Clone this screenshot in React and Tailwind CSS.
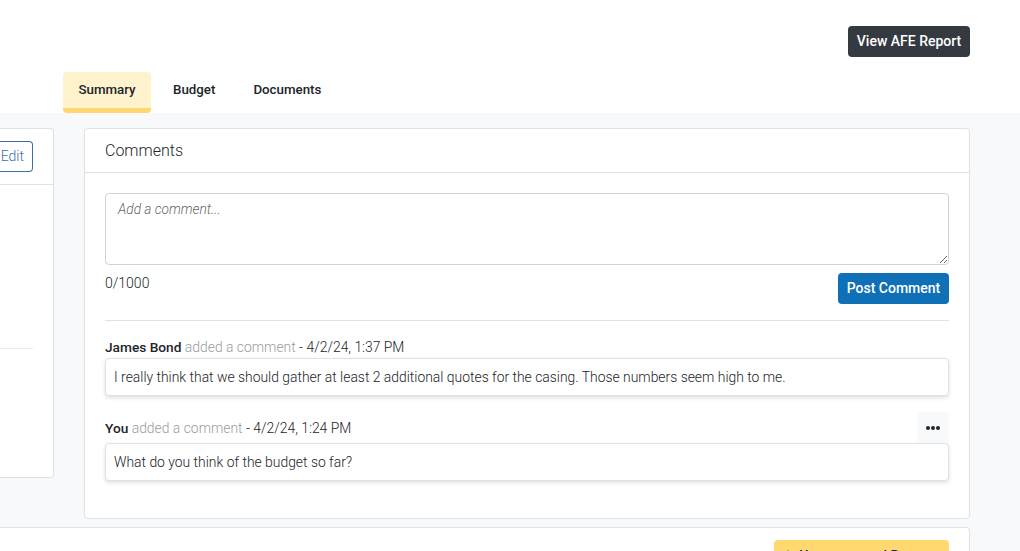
function Comment({ name, stamp, text, menu }) {
  return (
    <div>
      <div className="flex items-center justify-between">
        <div className={`text-[13.9px] leading-[21px] font-light text-[#212529] ${menu ? "pt-[2px]" : ""}`}>
          <span className="text-[13.7px] font-[460]">{name}</span>{" "}
          <span className="text-[#9a9da0]">added a comment</span> - {stamp}
        </div>
        {menu && (
          <button className="w-[32px] h-[31px] bg-[#f8f9fa] rounded-[4px] flex items-center justify-center gap-[1px]">
            <span className="w-[4px] h-[4px] rounded-full bg-[#212529]" />
            <span className="w-[4px] h-[4px] rounded-full bg-[#212529]" />
            <span className="w-[4px] h-[4px] rounded-full bg-[#212529]" />
          </button>
        )}
      </div>
      <div className="border border-[#dee2e6] rounded-[4px] bg-white shadow-[0_2px_4px_rgba(0,0,0,0.12)] h-[38px] px-[8px] flex items-center text-[13.9px] font-light text-[#212529]">
        {text}
      </div>
    </div>
  );
}

export default function App() {
  return (
    <div className="w-[1020px] h-[551px] overflow-hidden bg-[#f8f9fa] font-['Roboto',sans-serif] flex flex-col">
      <header className="bg-white h-[113px] shrink-0 flex flex-col pl-[63px] pr-[50px]">
        <div className="flex justify-end pt-[26px]">
          <button className="h-[31px] w-[122px] bg-[#343a40] rounded-[4px] text-white text-[14px] font-[460]">View AFE Report</button>
        </div>
        <nav className="mt-[15px] flex text-[13.3px] font-[460] text-[#212529]">
          <div className="h-[41px] w-[88px] bg-[#fff3cd] border-b-[5px] border-[#ffd970] rounded-[4px] flex items-center justify-center">Summary</div>
          <div className="h-[41px] ml-[22px] pb-[5px] flex items-center">Budget</div>
          <div className="h-[41px] ml-[38px] pb-[5px] flex items-center">Documents</div>
        </nav>
      </header>

      <main className="flex-1 flex flex-col pt-[15px] pr-[50px] gap-[8px] min-h-0">
        <div className="flex gap-[30px] items-start">
          <section className="w-[54px] h-[350px] bg-white border border-l-0 border-[#dee2e6] rounded-r-[4px] flex flex-col">
            <div className="h-[56px] border-b border-[#dee2e6] shrink-0 flex items-center justify-end pr-[20px]">
              <button className="h-[31px] w-[33px] border border-[#3c6ea8] rounded-r-[4px] border-l-0 flex items-center justify-end pr-[8px] text-[14px] font-light text-[#3c6ea8]">Edit</button>
            </div>
            <div className="h-[164px] shrink-0 border-b border-[#e9ecef] mr-[20px]" />
          </section>

          <section className="flex-1 h-[391px] bg-white border border-[#dee2e6] rounded-[4px]">
            <div className="h-[44px] border-b border-[#dee2e6] px-[20px] flex items-center text-[16px] font-light text-[#212529]">Comments</div>
            <div className="px-[20px] pt-[20px]">
              <textarea
                readOnly
                placeholder="Add a comment..."
                className="block w-full h-[72px] border border-[#ced4da] rounded-[4px] px-[12px] py-[5px] text-[13.7px] italic font-light placeholder:text-[#5f666d] outline-none"
              />
              <div className="flex justify-between items-start mt-[8px]">
                <span className="text-[14px] leading-[21px] font-light text-[#212529]">0/1000</span>
                <button className="h-[31px] w-[111px] bg-[#0f70b7] rounded-[4px] text-white text-[14px] font-[460]">Post Comment</button>
              </div>
              <div className="border-t border-[#dee2e6] mt-[16px] pt-[16px] flex flex-col gap-[16px]">
                <Comment name="James Bond" stamp="4/2/24, 1:37 PM" text="I really think that we should gather at least 2 additional quotes for the casing. Those numbers seem high to me." />
                <Comment name="You" stamp="4/2/24, 1:24 PM" text="What do you think of the budget so far?" menu />
              </div>
            </div>
          </section>
        </div>

        <section className="bg-white border border-l-0 border-[#dee2e6] rounded-r-[4px] flex-1 -mb-[20px] flex justify-end pt-[12px] pr-[20px]">
          <button className="h-[31px] w-[175px] pt-[2px] bg-[#ffd970] rounded-[4px] text-[14px] font-[460] text-[#212529] whitespace-nowrap flex items-center justify-center gap-[4px]">
            <svg width="14" height="13" viewBox="0 0 14 13" fill="#212529"><path d="M7 0 L14 13 L0 13 Z" /></svg>
            Upstream and Request
          </button>
        </section>
      </main>
    </div>
  );
}
